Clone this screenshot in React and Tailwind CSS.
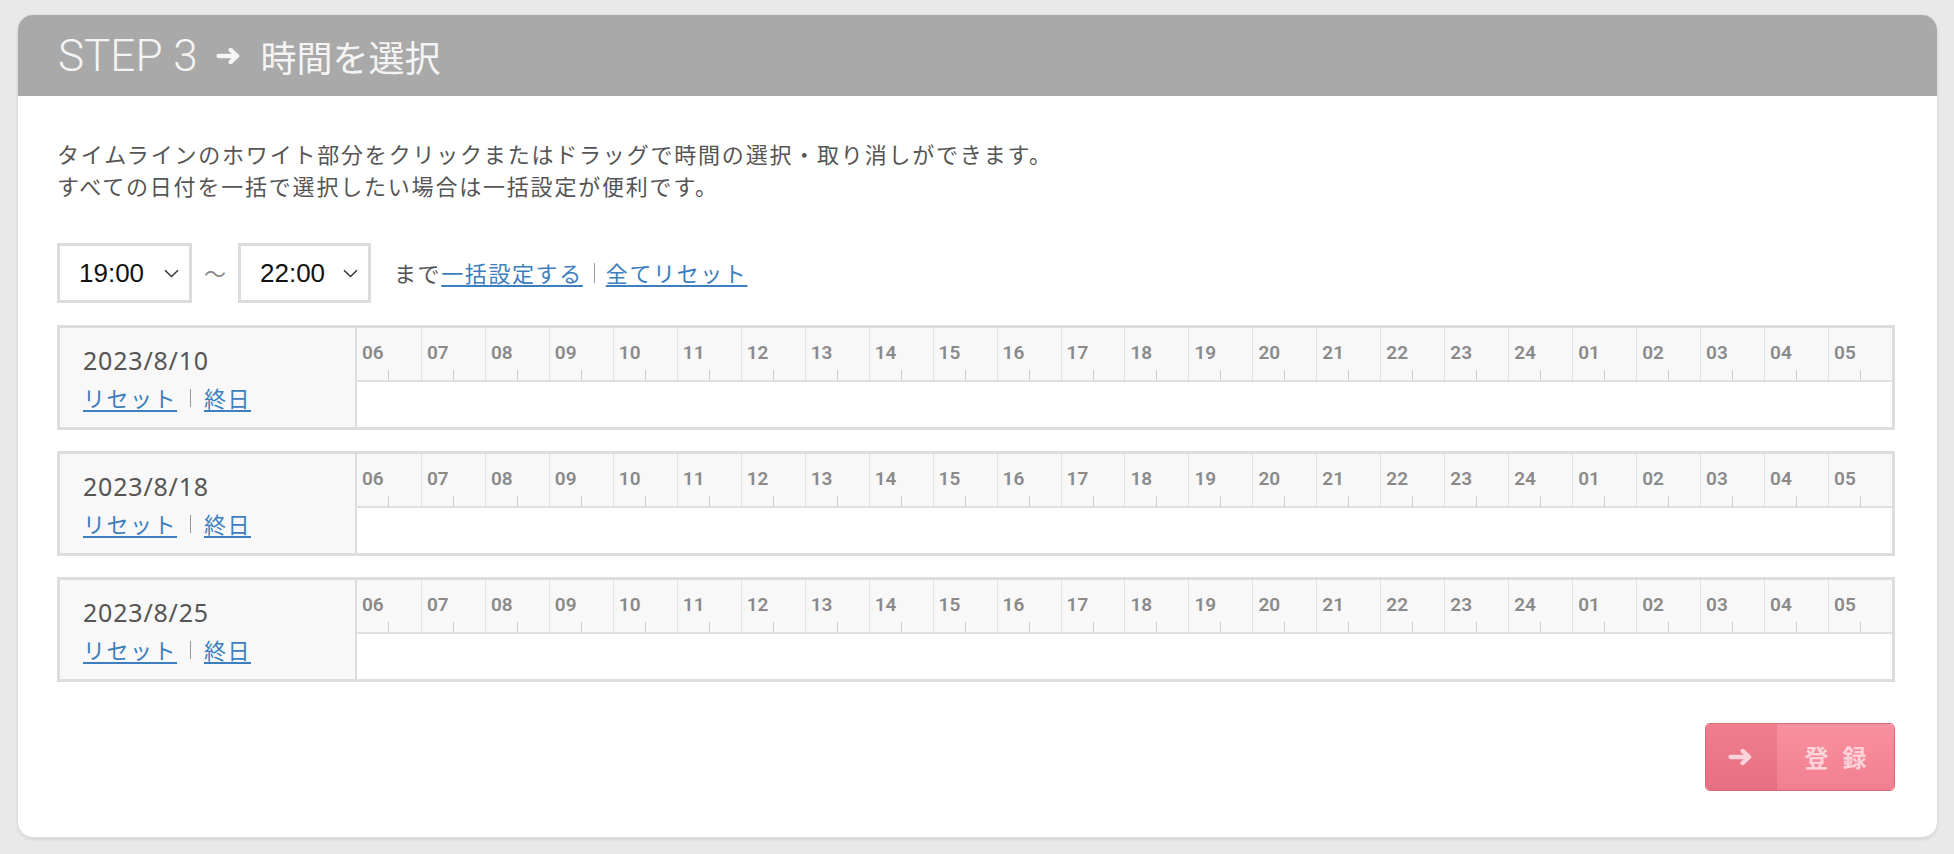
import React from 'react';

const HOURS = [
  '06', '07', '08', '09', '10', '11', '12', '13', '14', '15', '16', '17',
  '18', '19', '20', '21', '22', '23', '24', '01', '02', '03', '04', '05',
];

const DATES = ['2023/8/10', '2023/8/18', '2023/8/25'];

function Chevron() {
  return (
    <svg width="15" height="9" viewBox="0 0 15 9">
      <path d="M1 1.2l6.5 6.3 6.5-6.3" fill="none" stroke="#333" strokeWidth="1.5" />
    </svg>
  );
}

function BoldArrow({ color, w = 25, h = 15 }) {
  return (
    <svg width={w} height={h} viewBox="0 0 25 15">
      <path
        d="M2.2 7.5h17.5M13.5 1.8l6.2 5.7-6.2 5.7"
        fill="none"
        stroke={color}
        strokeWidth="4"
        strokeLinecap="round"
        strokeLinejoin="round"
      />
    </svg>
  );
}

function TimeSelect({ value, width }) {
  return (
    <div
      className="flex items-center justify-between h-[60px] border-[3px] border-[#dcdcdc] bg-white pl-[19px] pr-[10px]"
      style={{ width }}
    >
      <span className="text-[26px] text-[#111] font-['Liberation_Sans',sans-serif]">{value}</span>
      <Chevron />
    </div>
  );
}

function DayRow({ date }) {
  return (
    <div className="flex h-[105px] border-[3px] border-[#dddddd]">
      {/* date column */}
      <div className="w-[297px] shrink-0 bg-[#f8f8f8] border-r-2 border-[#dddddd] pl-[23px] pt-[13px] leading-[38px] text-[22px]">
        <div className="text-[25px] text-[#555] tracking-[0.8px]">{date}</div>
        <div className="flex items-center">
          <a className="text-[#3d7ebf] underline underline-offset-[3px] tracking-[1.5px]">リセット</a>
          <span className="w-px h-[18px] bg-[#999] mx-[13px]" />
          <a className="text-[#3d7ebf] underline underline-offset-[3px] tracking-[1.5px]">終日</a>
        </div>
      </div>

      {/* timeline */}
      <div className="flex-1 flex flex-col">
        <div className="h-[54px] bg-[#f8f8f8] border-b-2 border-[#e0e0e0] grid grid-cols-[repeat(24,minmax(0,1fr))]">
          {HOURS.map((h, i) => (
            <div
              key={h}
              className={i === 0 ? 'flex flex-col' : 'flex flex-col border-l border-[#e2e2e2]'}
            >
              <span className="pl-[5px] pt-[14px] text-[19px] leading-[22px] font-semibold text-[#8a8a8a] font-['Roboto',sans-serif]">
                {h}
              </span>
              <span className="mt-auto mx-auto h-[10px] w-px bg-[#cccccc]" />
            </div>
          ))}
        </div>
        <div className="flex-1 bg-white" />
      </div>
    </div>
  );
}

export default function App() {
  return (
    <div className="min-h-[854px] bg-[#e9e9e9] pt-[14px] pl-[17px] pr-[16px] pb-[16px] font-['Noto_Sans','Noto_Sans_CJK_JP',sans-serif]">
      <div className="bg-white rounded-[16px] border border-[#dedede] shadow-[0_2px_3px_rgba(0,0,0,0.08)] overflow-hidden">
        {/* header */}
        <div className="h-[81px] bg-[#a9a9a9] flex items-center pl-[40px] text-[#f4f4f4]">
          <span className="text-[44px] font-light font-['Roboto',sans-serif] leading-none">STEP 3</span>
          <span className="ml-[18px] mr-[18px] flex items-center">
            <BoldArrow color="#f4f4f4" w={27} h={16} />
          </span>
          <span className="text-[36px] leading-none font-['Noto_Sans_CJK_JP',sans-serif]">時間を選択</span>
        </div>

        {/* body */}
        <div className="pl-[39px] pr-[42px] pt-[42px] pb-[46px]">
          <div className="text-[22px] leading-[32px] text-[#555] tracking-[1.8px]">
            <p>タイムラインのホワイト部分をクリックまたはドラッグで時間の選択・取り消しができます。</p>
            <p>すべての日付を一括で選択したい場合は一括設定が便利です。</p>
          </div>

          <div className="mt-[41px] flex items-center">
            <TimeSelect value="19:00" width={135} />
            <span className="mx-[12px] text-[22px] text-[#888]">〜</span>
            <TimeSelect value="22:00" width={133} />
            <div className="ml-[23px] flex items-center text-[22px] tracking-[1.6px]">
              <span className="text-[#555]">まで</span>
              <a className="text-[#3d7ebf] underline underline-offset-[3px]">一括設定する</a>
              <span className="w-px h-[20px] bg-[#999] mx-[11px]" />
              <a className="text-[#3d7ebf] underline underline-offset-[3px]">全てリセット</a>
            </div>
          </div>

          <div className="mt-[22px] flex flex-col gap-[21px]">
            {DATES.map((d) => (
              <DayRow key={d} date={d} />
            ))}
          </div>

          <div className="mt-[41px] flex justify-end">
            <button className="flex h-[68px] w-[190px] rounded-[5px] border border-[#d9697a] overflow-hidden">
              <span className="w-[71px] flex items-center justify-center bg-linear-to-b from-[#ef7e8e] to-[#e76e80]">
                <BoldArrow color="#fbd3da" w={27} h={16} />
              </span>
              <span className="flex-1 flex items-center justify-center pl-[14px] bg-linear-to-b from-[#f8919f] to-[#f27f90] text-[24px] font-bold tracking-[14px] text-[#fcd3da] font-['Noto_Sans_CJK_JP',sans-serif]">
                登録
              </span>
            </button>
          </div>
        </div>
      </div>
    </div>
  );
}
